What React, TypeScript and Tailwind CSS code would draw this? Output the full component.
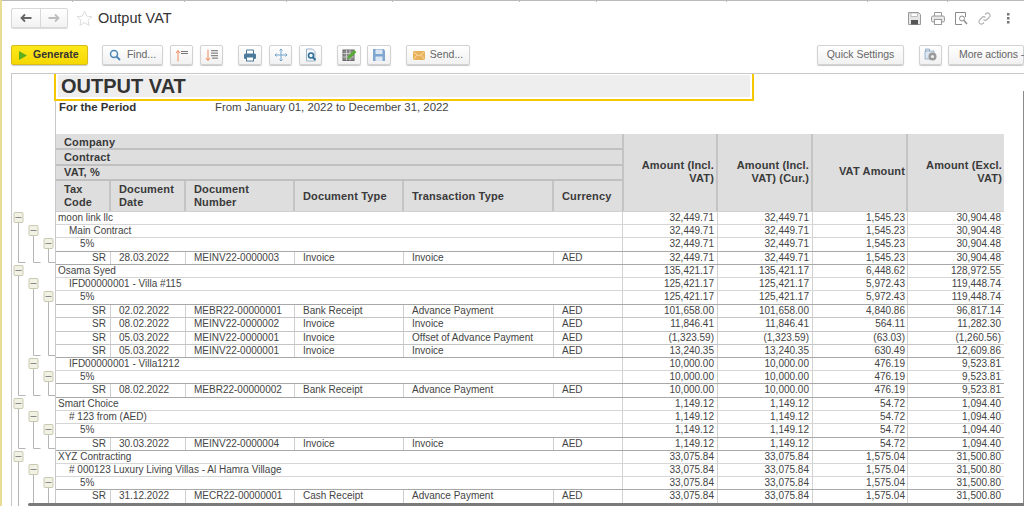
import React from "react";

const btn = "flex items-center justify-center shrink-0 h-5 border border-[#d2d2d2] rounded-[2px] bg-linear-to-b from-white to-[#f1f1f1] shadow-[0_1px_1px_rgba(0,0,0,0.22)] text-[#666] text-[10.5px]";

const ticks = [62, 112, 102, 106, 127, 77, 130, 141, 80];

type Row = { l: number; t?: string; d?: string[]; a: string[] };
const A = ["32,449.71", "32,449.71", "1,545.23", "30,904.48"];
const S = ["1,149.12", "1,149.12", "54.72", "1,094.40"];
const X = ["33,075.84", "33,075.84", "1,575.04", "31,500.80"];
const V = ["125,421.17", "125,421.17", "5,972.43", "119,448.74"];
const T = ["10,000.00", "10,000.00", "476.19", "9,523.81"];
const rows: Row[] = [
  { l: 0, t: "moon link llc", a: A },
  { l: 1, t: "Main Contract", a: A },
  { l: 2, t: "5%", a: A },
  { l: 3, d: ["SR", "28.03.2022", "MEINV22-0000003", "Invoice", "Invoice", "AED"], a: A },
  { l: 0, t: "Osama Syed", a: ["135,421.17", "135,421.17", "6,448.62", "128,972.55"] },
  { l: 1, t: "IFD00000001 - Villa #115", a: V },
  { l: 2, t: "5%", a: V },
  { l: 3, d: ["SR", "02.02.2022", "MEBR22-00000001", "Bank Receipt", "Advance Payment", "AED"], a: ["101,658.00", "101,658.00", "4,840.86", "96,817.14"] },
  { l: 3, d: ["SR", "08.02.2022", "MEINV22-0000002", "Invoice", "Invoice", "AED"], a: ["11,846.41", "11,846.41", "564.11", "11,282.30"] },
  { l: 3, d: ["SR", "05.03.2022", "MEINV22-0000001", "Invoice", "Offset of Advance Payment", "AED"], a: ["(1,323.59)", "(1,323.59)", "(63.03)", "(1,260.56)"] },
  { l: 3, d: ["SR", "05.03.2022", "MEINV22-0000001", "Invoice", "Invoice", "AED"], a: ["13,240.35", "13,240.35", "630.49", "12,609.86"] },
  { l: 1, t: "IFD00000001 - Villa1212", a: T },
  { l: 2, t: "5%", a: T },
  { l: 3, d: ["SR", "08.02.2022", "MEBR22-00000002", "Bank Receipt", "Advance Payment", "AED"], a: T },
  { l: 0, t: "Smart Choice", a: S },
  { l: 1, t: "# 123 from (AED)", a: S },
  { l: 2, t: "5%", a: S },
  { l: 3, d: ["SR", "30.03.2022", "MEINV22-0000004", "Invoice", "Invoice", "AED"], a: S },
  { l: 0, t: "XYZ Contracting", a: X },
  { l: 1, t: "# 000123 Luxury Living Villas - Al Hamra Village", a: X },
  { l: 2, t: "5%", a: X },
  { l: 3, d: ["SR", "31.12.2022", "MECR22-00000001", "Cash Receipt", "Advance Payment", "AED"], a: X },
];

const ys = [0, 13, 26, 40, 53, 66, 79, 93, 106, 120, 133, 146, 159, 172, 186, 199, 212, 226, 239, 252, 265, 278, 292];
const groups: [number, number, number][] = [
  [0, 0, 3], [0, 4, 13], [0, 14, 17], [0, 18, 30],
  [1, 1, 3], [1, 5, 10], [1, 11, 13], [1, 15, 17], [1, 19, 30],
  [2, 2, 3], [2, 6, 10], [2, 12, 13], [2, 16, 17], [2, 20, 30],
];

function Outline() {
  const xs = [6, 21, 36];
  return (
    <svg width="44" height="296" className="block shrink-0" aria-hidden="true">
      {groups.map(([lv, a, b], i) => {
        const x = xs[lv] + 0.5;
        const cy = ys[a] + 6;
        const by = b > 21 ? 320 : ys[b + 1] - 1.5;
        return (
          <g key={i}>
            <path d={`M${x} ${cy} V${by} H${lv === 2 ? 44 : x + 7}`} fill="none" stroke="#b5b5b5" strokeWidth="1" />
            <rect x={x - 4.5} y={cy - 5 + 0.5} width="9" height="10" rx="1" fill="#f2f2e4" stroke="#c9c9b2" />
            <path d={`M${x - 3} ${cy + 0.5} H${x + 3}`} stroke="#8a8a8a" strokeWidth="1" />
          </g>
        );
      })}
    </svg>
  );
}

const Star = () => (
  <svg width="17" height="17" viewBox="0 0 17 17" aria-hidden="true"><path d="M8.5 1.2l2.2 4.9 5.2.6-3.9 3.5 1.1 5.2-4.6-2.7-4.6 2.7 1.1-5.2L1.1 6.7l5.2-.6z" fill="none" stroke="#dcdcdc" /></svg>
);
const ArrowL = ({ c }: { c: string }) => (
  <svg width="12" height="10" viewBox="0 0 12 10" aria-hidden="true"><path d="M1 5h10.500M5 1.500L1.500 5 5 8.500" fill="none" stroke={c} strokeWidth="1.800" /></svg>
);
const ArrowR = ({ c }: { c: string }) => (
  <svg width="12" height="10" viewBox="0 0 12 10" aria-hidden="true"><path d="M11 5H.5M7 1.500L10.500 5 7 8.500" fill="none" stroke={c} strokeWidth="1.800" /></svg>
);
const SortUp = () => (
  <svg width="14" height="13" viewBox="0 0 14 13" aria-hidden="true"><path d="M3 12.500V1.500M1 4l2-2.500L5 4" fill="none" stroke="#ef8a5a" strokeWidth="1" /><path d="M6 2h7v1H6zM6 4h7v1H6z" fill="#777" /></svg>
);
const SortDown = () => (
  <svg width="14" height="13" viewBox="0 0 14 13" aria-hidden="true"><path d="M3 .5v11M1 9l2 2.500L5 9" fill="none" stroke="#ef8a5a" strokeWidth="1" /><path d="M6 1h7v1.200H6zM6 3.500h7v1.200H6zM6 6h7v1.200H6zM7 8.500h6v1.200H7z" fill="#888" /></svg>
);
const Printer = () => (
  <svg width="14" height="13" viewBox="0 0 14 13" aria-hidden="true"><path d="M3.500 5V1h7v4" fill="#fff" stroke="#4d7a9c" /><rect x="1" y="4.500" width="12" height="5.500" rx="1.500" fill="#4d7a9c" /><rect x="3.500" y="8" width="7" height="4" fill="#fff" stroke="#4d7a9c" /></svg>
);
const Move = () => (
  <svg width="14" height="14" viewBox="0 0 14 14" aria-hidden="true"><path d="M7 1v12M1 7h12M5.500 2.500L7 1l1.500 1.500M5.500 11.500L7 13l1.500-1.500M2.500 5.500L1 7l1.500 1.500M11.500 5.500L13 7l-1.500 1.500" fill="none" stroke="#6ea3cc" strokeWidth="1" /></svg>
);
const DocSearch = () => (
  <svg width="14" height="14" viewBox="0 0 14 14" aria-hidden="true"><path d="M2.500 1h6l2.500 2.500V13h-8.500z" fill="#f2f6fa" stroke="#9db4c6" /><circle cx="7" cy="7.500" r="2.500" fill="none" stroke="#2e6f9a" strokeWidth="1.500" /><path d="M9 9.500l2.500 2.500" stroke="#2e6f9a" strokeWidth="1.800" /></svg>
);
const Sheet = () => (
  <svg width="15" height="14" viewBox="0 0 15 14" aria-hidden="true"><rect x="1" y="2" width="11" height="10.500" fill="#8a8a8a" stroke="#666" /><path d="M1 5.500h11M1 9h11M4.500 2v10.500M8 2v10.500" stroke="#d8d8d8" strokeWidth=".8" /><path d="M5 11l1-3 6-6 2.500 2-6 6z" fill="#5aa83a" /></svg>
);
const Floppy = ({ c = "#7ea6cf", d = "#dbe7f2" }: { c?: string; d?: string }) => (
  <svg width="14" height="14" viewBox="0 0 14 14" aria-hidden="true"><path d="M1 1h10.500L13 2.500V13H1z" fill={c} /><rect x="3.500" y="1.500" width="7" height="4.500" fill={d} /><rect x="3.500" y="8.500" width="7" height="4.500" fill={d} /></svg>
);
const Mail = () => (
  <svg width="12" height="9" viewBox="0 0 12 9" aria-hidden="true"><rect width="12" height="9" rx="1" fill="#e8b25c" /><path d="M.5 1L6 5l5.500-4M.5 8.500L4 4M11.500 8.500L8 4" fill="none" stroke="#fbe3b5" strokeWidth=".8" /></svg>
);
const Gear = () => (
  <svg width="14" height="14" viewBox="0 0 14 14" aria-hidden="true"><path d="M1.500 3.500V1h4v2M1 3h9v8H1z" fill="#dbe6f0" stroke="#8aa6bf" strokeWidth=".8" /><circle cx="8.500" cy="8.500" r="4" fill="#9a9a9a" /><circle cx="8.500" cy="8.500" r="1.600" fill="#eee" /></svg>
);
const Glass = () => (
  <svg width="12" height="12" viewBox="0 0 12 12" aria-hidden="true"><circle cx="5" cy="5" r="3.500" fill="none" stroke="#4a86b8" strokeWidth="1.500" /><path d="M7.500 7.500L11 11" stroke="#4a86b8" strokeWidth="1.800" /></svg>
);
const Play = () => (
  <svg width="8" height="9" viewBox="0 0 8 9" aria-hidden="true"><path d="M0 0l8 4.500L0 9z" fill="#5fae1e" /></svg>
);

const G = "#9a9a9a";
const TopIcons = () => (
  <div className="flex items-center gap-[10px] mr-[14px]">
    <svg width="13" height="13" viewBox="0 0 13 13" aria-hidden="true"><path d="M.5.500h10l2 2v10H.5z" fill="#e6e6e6" stroke={G} /><rect x="3" y="1" width="6.500" height="3.500" fill="#fff" stroke={G} strokeWidth=".6" /><rect x="3" y="8" width="7" height="4.500" fill="#555" /></svg>
    <svg width="14" height="13" viewBox="0 0 14 13" fill="none" stroke={G} aria-hidden="true"><path d="M3.500 4V.5h7V4" /><rect x=".5" y="4" width="13" height="6" rx="1.500" fill="#e8e8e8" /><rect x="3.500" y="7.500" width="7" height="5" fill="#fff" /></svg>
    <svg width="13" height="13" viewBox="0 0 13 13" fill="none" stroke="#8a8a8a" aria-hidden="true"><path d="M10.500 5V.5H.5v12H7" /><circle cx="7" cy="6.500" r="2.500" /><path d="M9 8.500L12 12" strokeWidth="1.500" /></svg>
    <svg width="13" height="13" viewBox="0 0 13 13" fill="none" stroke="#b0b0b0" strokeWidth="1.100" aria-hidden="true"><path d="M5.500 7.500a2.500 2.500 0 003.500 0l2.500-2.500a2.500 2.500 0 00-3.500-3.500L7 2.500" /><path d="M7.500 5.500a2.500 2.500 0 00-3.500 0l-2.500 2.500a2.500 2.500 0 003.500 3.500L6 10.500" /></svg>
    <svg width="3" height="11" viewBox="0 0 3 11" className="ml-[6px]" aria-hidden="true"><path d="M0 0h2.500v2.500H0zM0 4h2.500v2.500H0zM0 8h2.500v2.500H0z" fill="#777" /></svg>
  </div>
);

const cols = "grid-cols-[55px_75px_109px_109px_150px_68px_96px_95px_95px_96px]";
const hc = "bg-[#dedede] font-bold text-[#3a3a3a] text-[11px] leading-[13px] tracking-[0.15px] flex items-center";
const hb = "border-r-2 border-[#c4c4c4]";
const lv = ["pl-[2px]", "pl-[13px]", "pl-[24px]"];
const amt = ["pr-[3px]", "pr-[3px]", "pr-[2px]", "pr-[3px]"];

export default function App() {
  return (
    <div className="w-[1024px] h-[506px] overflow-hidden bg-white border-l-2 border-[#e9dc97] flex flex-col" style={{ fontFamily: '"Liberation Sans", Arial, sans-serif' }}>
      <div className="flex h-[2px] shrink-0 border-t border-[#b9b9b9]">
        {ticks.map((w, i) => (
          <div key={i} className="h-[1px] border-r border-[#b9b9b9]" style={{ width: w + (i === 0 ? 9 : 0) }} />
        ))}
      </div>

      <div className="flex items-center h-[32px] pl-[9px] shrink-0">
        <div className="flex h-[20px] w-[57px] border border-[#d8d8d8] rounded-[2px] bg-linear-to-b from-white to-[#f2f2f2] shadow-[0_1px_1px_rgba(0,0,0,0.15)]">
          <div className="w-[29px] flex items-center justify-center border-r border-[#d8d8d8]"><ArrowL c="#666" /></div>
          <div className="flex-1 flex items-center justify-center"><ArrowR c="#bdbdbd" /></div>
        </div>
        <div className="ml-[8px] flex"><Star /></div>
        <div className="ml-[5px] text-[#333] text-[14.5px] leading-[18px]">Output VAT</div>
        <div className="ml-auto"><TopIcons /></div>
      </div>

      <div className="flex items-center h-[20px] mt-[11px] pl-[9px] shrink-0">
        <div className="flex items-center shrink-0 w-[77px] h-5 border border-[#d6bd1c] rounded-[2px] bg-linear-to-b from-[#ffe81a] to-[#f6d800] shadow-[0_1px_1px_rgba(0,0,0,0.2)] text-[#333] text-[10.5px] font-bold">
          <span className="ml-[7px] flex"><Play /></span>
          <span className="ml-[6px]">Generate</span>
        </div>
        <div className={`${btn} w-[61px] ml-[14px] gap-[6px]`}><Glass /><span>Find...</span></div>
        <div className={`${btn} w-[23px] ml-[7px]`}><SortUp /></div>
        <div className={`${btn} w-[23px] ml-[7px]`}><SortDown /></div>
        <div className={`${btn} w-[24px] ml-[15px]`}><Printer /></div>
        <div className={`${btn} w-[23px] ml-[7px]`}><Move /></div>
        <div className={`${btn} w-[23px] ml-[7px]`}><DocSearch /></div>
        <div className={`${btn} w-[24px] ml-[15px]`}><Sheet /></div>
        <div className={`${btn} w-[24px] ml-[6px]`}><Floppy /></div>
        <div className={`${btn} w-[64px] ml-[15px] gap-[5px]`}><Mail /><span>Send...</span></div>
        <div className={`${btn} w-[87px] ml-[347px]`}><span>Quick Settings</span></div>
        <div className={`${btn} w-[23px] ml-[15px]`}><Gear /></div>
        <div className={`${btn} w-[76px] ml-[6px] justify-start pl-[10px] whitespace-nowrap tracking-[-0.1px]`}><span>More actions -</span></div>
      </div>

      <div className="ml-[9px] mt-[8px] flex-1 flex border-t border-l border-[#c8c8c8] min-h-0 relative">
        <div className="w-[43px] shrink-0 flex flex-col">
          <div className="h-[137px] shrink-0" />
          <Outline />
        </div>
        <div className="flex-1 min-w-0 flex flex-col border-l border-[#c8c8c8]">
          <div className="w-[700px] h-[27px] shrink-0 border-r-2 border-b-2 border-l-2 border-[#f5c800] bg-white pl-[2px] pr-[2px] pb-[2px] pt-[1px] -ml-[2px]">
            <div className="h-full bg-[#eeeeee] pl-[3px] text-[20px] leading-[22px] font-bold text-[#333]">OUTPUT VAT</div>
          </div>
          <div className="flex h-[33px] shrink-0 text-[11.4px] leading-[13px]">
            <div className="w-[159px] pl-[3px] font-bold text-[#333]">For the Period</div>
            <div className="text-[#444]">From January 01, 2022 to December 31, 2022</div>
          </div>

          <div className={`grid ${cols} grid-rows-[16px_16px_15px_30px] w-[948px] shrink-0`}>
            <div className={`${hc} col-span-6 pl-[8px] pt-[2px] border-b-2 border-[#c0c0c0]`}>Company</div>
            <div className={`${hc} row-span-4 col-start-7 row-start-1 justify-end text-right pr-[2px] pb-[2px] border-r-2 border-l-2 border-[#c4c4c4]`}><span>Amount (Incl.<br />VAT)</span></div>
            <div className={`${hc} row-span-4 col-start-8 row-start-1 justify-end text-right pr-[2px] pb-[2px] ${hb}`}><span>Amount (Incl.<br />VAT) (Cur.)</span></div>
            <div className={`${hc} row-span-4 col-start-9 row-start-1 justify-end text-right pr-[1px] pb-[2px] ${hb}`}>VAT Amount</div>
            <div className={`${hc} row-span-4 col-start-10 row-start-1 justify-end text-right pr-[2px] pb-[2px]`}><span>Amount (Excl.<br />VAT)</span></div>
            <div className={`${hc} col-span-6 pl-[8px] border-b-2 border-[#c0c0c0]`}>Contract</div>
            <div className={`${hc} col-span-6 pl-[8px] border-b-2 border-[#c0c0c0]`}>VAT, %</div>
            <div className={`${hc} pl-[8px] ${hb}`}>Tax<br />Code</div>
            <div className={`${hc} pl-[8px] ${hb}`}>Document<br />Date</div>
            <div className={`${hc} pl-[8px] ${hb}`}>Document<br />Number</div>
            <div className={`${hc} pl-[8px] ${hb}`}>Document Type</div>
            <div className={`${hc} pl-[8px] ${hb}`}>Transaction Type</div>
            <div className={`${hc} pl-[8px]`}>Currency</div>
          </div>

          <div className="flex flex-col shrink-0 w-[948px] border-t border-[#d0d0d0] text-[10px] leading-[12px] text-[#444]">
            {rows.map((r, i) => {
              const next = rows[i + 1];
              const dark = (next && next.l === 3 && r.l !== 3) || (r.l === 3 && next && next.l !== 3);
              return (
                <div
                  key={i}
                  className={`grid ${cols} shrink-0 border-b whitespace-nowrap ${dark ? "border-[#a8a8a8]" : r.l === 3 ? "border-[#c4c4c4]" : "border-[#d6d6d6]"}`}
                  style={{ height: ys[i + 1] - ys[i] }}
                >
                  {r.d ? (
                    <>
                      <div className="text-right pr-[4px] border-r border-[#cfcfcf]">{r.d[0]}</div>
                      {r.d.slice(1).map((c, j) => (
                        <div key={j} className={`pl-[8px] ${j < 4 ? "border-r border-[#cfcfcf]" : ""}`}>{c}</div>
                      ))}
                    </>
                  ) : (
                    <div className={`col-span-6 ${lv[r.l]}`}>{r.t}</div>
                  )}
                  {r.a.map((c, j) => (
                    <div key={j} className={`text-right ${amt[j]} ${j === 0 ? "border-l" : ""} ${j < 3 ? "border-r" : ""} border-[#d2d2d2]`}>{c}</div>
                  ))}
                </div>
              );
            })}
          </div>
        </div>
        <div className="absolute right-0 top-[17px] bottom-0 w-[1px] bg-[#8a8a8a]" />
        <div className="absolute left-[16px] right-0 bottom-0 h-[3px] rounded-l-[2px] bg-[#7a7a7a]" />
      </div>
    </div>
  );
}
